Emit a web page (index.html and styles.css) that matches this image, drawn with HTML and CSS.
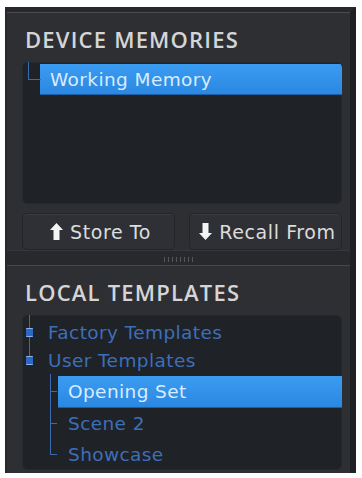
FILE: index.html
```html
<!DOCTYPE html>
<html>
<head>
<meta charset="utf-8">
<link rel="stylesheet" href="styles.css">
</head>
<body>
<div class="panel">
  <section class="sec sec-top">
    <h2 class="title">DEVICE MEMORIES</h2>
    <div class="listbox lb1">
      <div class="row sel first"><span class="elbow"></span>Working Memory</div>
    </div>
    <div class="buttons">
      <button class="btn"><svg class="arr" viewBox="0 0 13 17" width="13" height="17"><path d="M6.5 0 L13 7 L9.5 7 L9.5 17 L3.5 17 L3.5 7 L0 7 Z" fill="#f4f4f4"/></svg>Store To</button>
      <button class="btn"><svg class="arr" viewBox="0 0 13 17" width="13" height="17"><path d="M6.5 17 L13 10 L9.5 10 L9.5 0 L3.5 0 L3.5 10 L0 10 Z" fill="#f4f4f4"/></svg>Recall From</button>
    </div>
  </section>
  <div class="splitter"><span class="grip"></span></div>
  <section class="sec sec-bot">
    <h2 class="title">LOCAL TEMPLATES</h2>
    <div class="listbox lb2">
      <div class="vline"></div>
      <div class="row node"><span class="exp"></span>Factory Templates</div>
      <div class="row node"><span class="exp"></span>User Templates</div>
      <div class="children">
        <div class="row child sel"><span class="tick"></span>Opening Set</div>
        <div class="row child"><span class="tick"></span>Scene 2</div>
        <div class="row child last"><span class="tick"></span>Showcase</div>
      </div>
    </div>
  </section>
</div>
</body>
</html>
```

FILE: styles.css
```css
html, body {
  margin: 0;
  padding: 0;
  background: #ffffff;
}
body {
  font-family: "Open Sans", "DejaVu Sans", sans-serif;
}
.panel {
  margin: 7px 0 0 5px;
  width: 351px;
  height: 466px;
  background: #2e2f33;
  border-top: 5px solid #28292c;
  border-left: 2px solid #27282b;
  border-right: 6px solid #1f2023;
  box-shadow: inset 0 1px 0 #4a4b50;
  display: flex;
  flex-direction: column;
  box-sizing: border-box;
  overflow: hidden;
}
.sec {
  padding: 0 8px 0 15px;
}
.sec-top {
  padding-top: 12px;
}
.title {
  margin: 0;
  font-size: 22px;
  font-weight: 600;
  color: #d5d5d7;
  letter-spacing: 1.2px;
  line-height: 30px;
  height: 30px;
  padding-left: 3px;
  white-space: nowrap;
}
.listbox {
  background: #1f2227;
  border-radius: 6px;
  box-shadow: inset 0 0 0 1px #25282d;
  position: relative;
  overflow: hidden;
}
.lb1 {
  margin-top: 8px;
  height: 142px;
}
.row {
  font-family: "DejaVu Sans", sans-serif;
  font-size: 18.5px;
  letter-spacing: 0.4px;
  color: #3d6fb8;
  height: 31px;
  line-height: 31px;
  position: relative;
  white-space: nowrap;
}
.row.sel {
  background: linear-gradient(#3b9bf1, #2b87e0);
  color: #d9ecff;
  box-shadow: inset 0 -1px 0 #1b5fa9;
}
.row.first {
  margin-left: 18px;
  margin-top: 2px;
  padding-left: 10px;
}
.elbow {
  position: absolute;
  left: -12px;
  top: -2px;
  width: 12px;
  height: 17px;
  border-left: 1px solid #3a6bb0;
  border-bottom: 1px solid #3a6bb0;
}
.buttons {
  display: flex;
  gap: 14px;
  margin-top: 9px;
}
.btn {
  flex: 1;
  height: 37px;
  background: #2f3035;
  border: 1px solid #232428;
  border-radius: 5px;
  box-shadow: inset 0 1px 0 #3b3c41;
  color: #dcdcdc;
  font-family: "DejaVu Sans", sans-serif;
  font-size: 19px;
  letter-spacing: 0.6px;
  display: flex;
  align-items: center;
  justify-content: center;
  gap: 7px;
  padding: 0 0 0 4px;
}
.arr {
  display: block;
}
.splitter {
  height: 18px;
  background: #28292d;
  border-top: 1px solid #36373c;
  border-bottom: 1px solid #45464b;
  box-sizing: border-box;
  display: flex;
  align-items: flex-end;
  justify-content: center;
  padding-bottom: 3px;
}
.grip {
  width: 30px;
  height: 5px;
  background: repeating-linear-gradient(90deg, #55565b 0 1px, transparent 1px 4px);
}
.sec-bot {
  padding-top: 11px;
  padding-bottom: 3px;
  flex: 1;
  display: flex;
  flex-direction: column;
}
.lb2 {
  margin-top: 8px;
  flex: 1;
  padding-top: 4px;
}
.vline {
  position: absolute;
  left: 7px;
  top: 0;
  height: 46px;
  border-left: 1px solid #3a6bb0;
}
.row.node {
  padding-left: 26px;
  height: 28px;
  line-height: 28px;
}
.exp {
  position: absolute;
  left: 4px;
  top: 9px;
  width: 7px;
  height: 9px;
  background: #2c69c4;
  border-radius: 1px;
  box-shadow: inset 0 -3px 0 -2px #8ab2ea, inset 0 3px 0 -2px #8ab2ea;
}
.children {
  position: relative;
  margin-top: 1px;
}
.children::before {
  content: "";
  position: absolute;
  left: 28px;
  top: -2px;
  height: 80px;
  border-left: 1px solid #3a6bb0;
}
.row.child {
  margin-left: 36px;
  padding-left: 10px;
}
.row.child.sel {
  height: 32px;
  line-height: 32px;
}
.row.child .tick {
  position: absolute;
  left: -8px;
  top: 15px;
  width: 7px;
  border-top: 1px solid #3a6bb0;
}
```
